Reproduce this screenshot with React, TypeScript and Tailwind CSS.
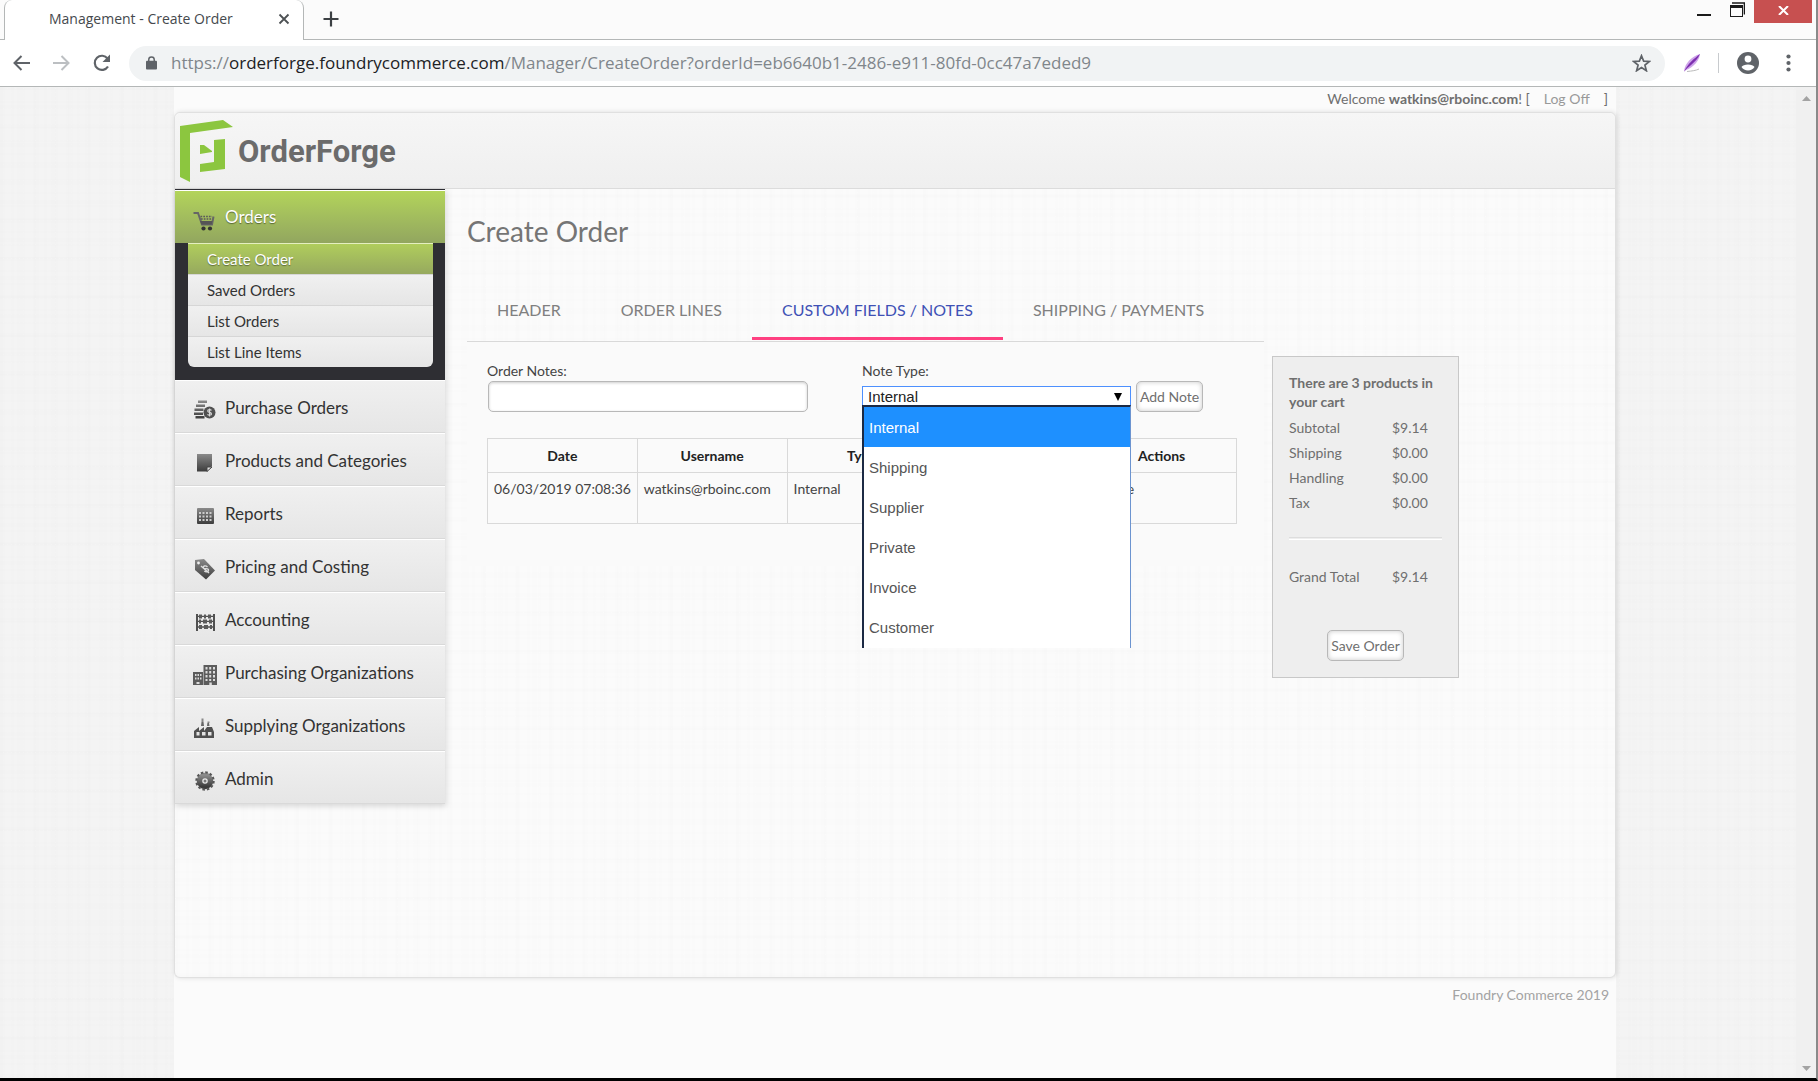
import React from "react";

const fill = "url(#steel)";

function SteelGradient() {
  return (
    <svg width="0" height="0" className="absolute" aria-hidden="true">
      <defs>
        <linearGradient id="steel" x1="0" y1="0" x2="0" y2="1">
          <stop offset="0" stopColor="#8a8a8a" />
          <stop offset="1" stopColor="#3c3c3c" />
        </linearGradient>
      </defs>
    </svg>
  );
}

function CartIcon() {
  return (
    <svg width="24" height="24" viewBox="0 0 24 24" aria-hidden="true">
      <path d="M1.500 4h4.500l4 11.500h10l1.500-8" fill="none" stroke="#666" strokeWidth="2" />
      <path d="M8 12h12.500l-.8 3.500H9.500z" fill="#555" />
      <path d="M8.500 7.500h11.500M9 10h11" stroke="#5a5a5a" strokeWidth="1.400" strokeDasharray="1.700 1.100" />
      <circle cx="11.500" cy="19.500" r="2.100" fill="#333" />
      <circle cx="18" cy="19.500" r="2.100" fill="#333" />
    </svg>
  );
}

function CoinsIcon() {
  return (
    <svg width="24" height="24" viewBox="0 0 24 24" aria-hidden="true">
      <path d="M6 2.500h9v2.500H6zM4 6.500h9v2.500H4zM2.500 10.500h9V13h-9zM2 14.500h9V17H2zM3.500 18h9v2.500h-9z" fill={fill} />
      <circle cx="17.500" cy="14.500" r="6" fill="#505050" />
      <path d="M19.500 12.300c-1-1-3.800-1-3.800.6 0 1.900 3.800 1 3.800 3 0 1.500-3 1.500-4 .4M17.600 10.600v8" fill="none" stroke="#ddd" strokeWidth="1.100" />
    </svg>
  );
}

function PageIcon() {
  return (
    <svg width="24" height="24" viewBox="0 0 24 24" aria-hidden="true">
      <path d="M5 3h15v12l-5 5.500H5z" fill={fill} />
      <path d="M15 20.500V16h5z" fill="#e4e4e4" stroke="#444" strokeWidth="1" />
    </svg>
  );
}

function TableIcon() {
  return (
    <svg width="24" height="24" viewBox="0 0 24 24" aria-hidden="true">
      <rect x="5" y="4" width="17" height="16" rx="1" fill={fill} />
      <path d="M7 8h2v2H7zM10.500 8h2v2h-2zM14 8h2v2h-2zM17.500 8h2v2h-2zM7 11.500h2v2H7zM10.500 11.500h2v2h-2zM14 11.500h2v2h-2zM17.500 11.500h2v2h-2zM7 15h2v2H7zM10.500 15h2v2h-2zM14 15h2v2h-2zM17.500 15h2v2h-2z" fill="#ccc" />
    </svg>
  );
}

function TagIcon() {
  return (
    <svg width="24" height="24" viewBox="0 0 24 24" aria-hidden="true">
      <path d="M3 3l9-1 11 11.500L14 22.500 3 13z" fill={fill} />
      <circle cx="6.500" cy="6" r="1.400" fill="#eee" />
      <path d="M15.500 10c-2-2-5-1-4 1 .8 1.600 3.800-.4 4.800 1.400 1 2-2 3.300-4 1.600M9 9l8 7" fill="none" stroke="#ddd" strokeWidth="1.400" />
    </svg>
  );
}

function AbacusIcon() {
  return (
    <svg width="24" height="24" viewBox="0 0 24 24" aria-hidden="true">
      <path d="M4 4h2v17H4zM21 4h2v17h-2zM5 5.700h17v1.300H5zM5 10.800h17v1.300H5zM5 16.300h17v1.400H5z" fill="#505050" />
      <path d="M7 4.500h3v4H7zM12 4.500h2v4h-2zM16 4.500h3v4h-3zM7 9.500h2v4H7zM11 9.500h4v4h-4zM17 9.500h3v4h-3zM7 15h3v4H7zM12 15h4v4h-4zM18 15h2v4h-2z" fill="#5a5a5a" />
    </svg>
  );
}

function BuildingsIcon() {
  return (
    <svg width="26" height="24" viewBox="0 0 26 24" aria-hidden="true">
      <path d="M1 9h10v13H1zM11.500 2H25v20H11.500z" fill="#5c5c5c" />
      <path d="M3 11h1.500v2H3zM5.500 11H7v2H5.500zM8 11h1.500v2H8zM3 14.500h1.500v2H3zM5.500 14.500H7v2H5.500zM8 14.500h1.500v2H8zM13.500 4h2v2.500h-2zM17.200 4h2v2.500h-2zM21 4h2v2.500h-2zM13.500 8h2v2.500h-2zM17.200 8h2v2.500h-2zM21 8h2v2.500h-2zM13.500 12h2v2.500h-2zM17.200 12h2v2.500h-2zM21 12h2v2.500h-2zM13.500 16h2v2h-2zM17.200 16h2v2h-2zM21 16h2v2h-2zM4.500 19h3v2h-3zM17.300 19.500h2.500V22h-2.500z" fill="#dcdcdc" />
    </svg>
  );
}

function FactoryIcon() {
  return (
    <svg width="24" height="24" viewBox="0 0 24 24" aria-hidden="true">
      <path d="M2 15l5-4v4l5-4v4l3-4h5l2 5v6H2z" fill="#505050" />
      <path d="M9 10l.5-4h2l.5 4zM15 10l.4-3h1.600l.5 3z" fill="#666" />
      <path d="M10.500 6V2.500M16.500 7V5.500" stroke="#888" strokeWidth="2" />
      <path d="M4.500 16h3v3.500h-3zM10 16h3.500v3.500H10zM16 16h3.500v3.500H16z" fill="#e4e4e4" />
    </svg>
  );
}

function GearIcon() {
  return (
    <svg width="24" height="24" viewBox="0 0 24 24" aria-hidden="true">
      <circle cx="13" cy="12" r="5.500" fill="none" stroke={fill} strokeWidth="5.500" />
      <circle cx="13" cy="12" r="8.700" fill="none" stroke="#555" strokeWidth="2" strokeDasharray="2.555 2" />
      <circle cx="13" cy="12" r="1.500" fill="#777" />
    </svg>
  );
}

const subItems = ["Create Order", "Saved Orders", "List Orders", "List Line Items"];

const menu = [
  { label: "Purchase Orders", Icon: CoinsIcon },
  { label: "Products and Categories", Icon: PageIcon },
  { label: "Reports", Icon: TableIcon },
  { label: "Pricing and Costing", Icon: TagIcon },
  { label: "Accounting", Icon: AbacusIcon },
  { label: "Purchasing Organizations", Icon: BuildingsIcon },
  { label: "Supplying Organizations", Icon: FactoryIcon },
  { label: "Admin", Icon: GearIcon },
];

const tabs = ["HEADER", "ORDER LINES", "CUSTOM FIELDS / NOTES", "SHIPPING / PAYMENTS"];
const noteTypes = ["Internal", "Shipping", "Supplier", "Private", "Invoice", "Customer"];
const totals = [
  ["Subtotal", "$9.14"],
  ["Shipping", "$0.00"],
  ["Handling", "$0.00"],
  ["Tax", "$0.00"],
];

const linen =
  "bg-[repeating-linear-gradient(90deg,rgba(0,0,0,0.005)_0px,rgba(0,0,0,0.005)_3px,transparent_3px,transparent_11px),repeating-linear-gradient(90deg,rgba(0,0,0,0.005)_0px,rgba(0,0,0,0.005)_5px,transparent_5px,transparent_17px),repeating-linear-gradient(0deg,rgba(0,0,0,0.005)_0px,rgba(0,0,0,0.005)_2px,transparent_2px,transparent_13px),repeating-linear-gradient(0deg,rgba(0,0,0,0.005)_0px,rgba(0,0,0,0.005)_4px,transparent_4px,transparent_19px)]";

function BrowserChrome() {
  return (
    <header className="shrink-0 bg-white font-['Open_Sans',sans-serif]">
      <div className="flex h-[40px] border-b border-[#b4b7b7] bg-[#fbfbfb]">
        <div className="-mb-px ml-[4px] flex w-[300px] items-center rounded-t-lg border-x border-[#b4b7b7] bg-white pr-[9px] pb-[3px] pl-[44px]">
          <span className="flex-1 whitespace-nowrap text-[14px] text-[#45494d]">Management - Create Order</span>
          <button aria-label="Close tab" className="p-1">
            <svg width="12" height="12" viewBox="0 0 12 12" aria-hidden="true">
              <path d="M1.500 1.500l9 9M10.500 1.500l-9 9" stroke="#4d5154" strokeWidth="1.800" />
            </svg>
          </button>
        </div>
        <button aria-label="New tab" className="ml-[18px] self-center pb-[2px]">
          <svg width="18" height="16" viewBox="0 0 18 16" aria-hidden="true">
            <path d="M1.500 8h15M9 .5v15" stroke="#3c4043" strokeWidth="2.200" />
          </svg>
        </button>
        <div className="flex-1" />
        <div className="mr-[4px] flex items-start">
          <button aria-label="Minimize" className="px-[10px] pt-[14px] pb-2">
            <svg width="14" height="2" aria-hidden="true"><rect width="14" height="2" fill="#1a1a1a" /></svg>
          </button>
          <button aria-label="Restore" className="px-[9px] pt-[2px]">
            <svg width="15" height="15" viewBox="0 0 15 15" aria-hidden="true">
              <path d="M2 1h12.500v11.500" fill="none" stroke="#1a1a1a" strokeWidth="1.600" />
              <rect x=".5" y="3.500" width="12" height="11" fill="#fbfbfb" stroke="#1a1a1a" />
              <rect x="0" y="3" width="13" height="3" fill="#1a1a1a" />
            </svg>
          </button>
          <button aria-label="Close" className="flex h-[23px] w-[58px] items-center justify-center bg-[#c75050] pb-[3px]">
            <svg width="11" height="9" viewBox="0 0 11 9" aria-hidden="true">
              <path d="M1 0l9 9M10 0L1 9" stroke="#fff" strokeWidth="2" />
            </svg>
          </button>
        </div>
      </div>
      <div className="flex h-[47px] items-center border-b border-[#b4b7b7] pr-[21px] pl-[13px]">
        <button aria-label="Back">
          <svg width="17" height="16" viewBox="0 0 17 16" aria-hidden="true">
            <path d="M17 8H2M8.500 1L1.500 8l7 7" fill="none" stroke="#5f6368" strokeWidth="2" />
          </svg>
        </button>
        <button aria-label="Forward" className="ml-[23px]">
          <svg width="17" height="16" viewBox="0 0 17 16" aria-hidden="true">
            <path d="M0 8h15M8.500 1l7 7-7 7" fill="none" stroke="#bcbfc2" strokeWidth="2" />
          </svg>
        </button>
        <button aria-label="Reload" className="ml-[22px]">
          <svg width="20" height="18" viewBox="0 0 20 18" aria-hidden="true">
            <path d="M15.600 4.600A7.100 7.100 0 1 0 16 12.500" fill="none" stroke="#5f6368" strokeWidth="2.200" />
            <path d="M18 .5V8h-7.500z" fill="#5f6368" />
          </svg>
        </button>
        <div className="ml-[17px] flex h-[35px] min-w-0 flex-1 items-center rounded-full bg-[#f1f3f4] pr-[14px] pl-[17px]">
          <svg width="11" height="14" viewBox="0 0 12 15" className="shrink-0" aria-hidden="true">
            <rect x="0" y="5" width="12" height="9.500" rx="1" fill="#5f6368" />
            <path d="M3 6V4a3 3 0 0 1 6 0v2" fill="none" stroke="#5f6368" strokeWidth="1.600" />
          </svg>
          <div
            role="textbox"
            tabIndex={0}
            aria-label="Address"
            className="ml-[14px] min-w-0 flex-1 overflow-hidden whitespace-nowrap text-[17px] leading-[24px] text-[#80868b]"
          >
            https://<span className="text-[#202124]">orderforge.foundrycommerce.com</span>/Manager/CreateOrder?orderId=eb6640b1-2486-e911-80fd-0cc47a7eded9
          </div>
          <button aria-label="Bookmark this page">
            <svg width="19" height="18" viewBox="0 0 22 21" aria-hidden="true">
              <path d="M11 2l2.500 6.300 6.700.4-5.200 4.300 1.700 6.500L11 15.900l-5.700 3.600L7 13 1.800 8.700l6.700-.4z" fill="none" stroke="#5f6368" strokeWidth="2" />
            </svg>
          </button>
        </div>
        <button aria-label="Feather extension" className="ml-[18px]">
          <svg width="18" height="20" viewBox="0 0 18 20" aria-hidden="true">
            <path d="M17 1C9 3 2 10 1 18c5-2 15-7 16-17z" fill="#cfa6ea" />
            <path d="M17 1C12 5 4 11 1 19c3-5 12-9 16-18z" fill="#7d2fb0" />
            <path d="M4 18.500c5-.5 9-1 12-2.500" stroke="#bbb" fill="none" />
          </svg>
        </button>
        <div className="ml-[17px] h-[20px] w-px bg-[#c8cbce]" />
        <button aria-label="Profile" className="ml-[17px]">
          <svg width="24" height="24" viewBox="0 0 24 24" aria-hidden="true">
            <circle cx="12" cy="12" r="11" fill="#5f6368" />
            <circle cx="12" cy="8" r="3.400" fill="#fff" />
            <path d="M5.500 16c1.500-3.500 11.500-3.500 13 0-2.500 4.500-10.500 4.500-13 0z" fill="#fff" />
          </svg>
        </button>
        <button aria-label="Browser menu" className="ml-[22px] p-[4px]">
          <svg width="5" height="18" viewBox="0 0 5 18" aria-hidden="true">
            <circle cx="2.500" cy="2.500" r="2.100" fill="#5f6368" />
            <circle cx="2.500" cy="9" r="2.100" fill="#5f6368" />
            <circle cx="2.500" cy="15.500" r="2.100" fill="#5f6368" />
          </svg>
        </button>
      </div>
    </header>
  );
}

function Logo() {
  return (
    <a href="#home" className="flex items-center gap-[5px]" aria-label="OrderForge">
      <svg width="53" height="63" viewBox="0 0 53 63" aria-hidden="true">
        <g fill="#8cc63f">
          <path d="M0 6L43 0l10 7-43 6v49L0 57z" />
          <path d="M34 20l11-1v30l-25 3v-8l14-2z" />
          <path d="M20 25h4l8 6v1l-12 2z" />
        </g>
      </svg>
      <span className="font-[Roboto,sans-serif] text-[31px] leading-[40px] font-bold text-[#6b6b6b]">OrderForge</span>
    </a>
  );
}

function Sidebar() {
  return (
    <nav className="w-[270px] shrink-0 self-start text-[#333] shadow-[1px_2px_6px_rgba(0,0,0,0.15)]">
      <div className="border-t border-[#2e2e33] bg-[#2e2e33] pb-[13px]">
        <a href="#orders" className="flex h-[53px] items-center border-t border-white bg-gradient-to-b from-[#b3d45a] to-[#92a65f] text-[17px] text-white [text-shadow:0_1px_1px_rgba(0,0,0,0.45)]">
          <span className="mt-[8px] ml-[17px] w-[33px]"><CartIcon /></span>
          Orders
        </a>
        <ul className="mr-[12px] ml-[13px] overflow-hidden rounded-b-md text-[15px]">
          {subItems.map((item, i) => (
            <li key={item}>
              <a
                href="#submenu"
                className={
                  i === 0
                    ? "flex h-[31px] items-center border-t border-[#e4efc0] bg-gradient-to-b from-[#b0cd5c] to-[#96a95e] pl-[19px] text-white [text-shadow:0_1px_1px_rgba(0,0,0,0.4)]"
                    : "flex h-[31px] items-center border-t border-[#d6d6d6] bg-gradient-to-b from-[#f0f0f0] to-[#e6e6e6] pl-[19px]"
                }
              >
                {item}
              </a>
            </li>
          ))}
        </ul>
      </div>
      <ul>
        {menu.map(({ label, Icon }) => (
          <li key={label}>
            <a href="#menu" className="flex h-[53px] items-center border-t border-b border-t-white border-b-[#d9d9d9] bg-gradient-to-b from-[#f0f0f0] to-[#e6e6e6] pt-[2px] text-[17px]">
              <span className="mt-[4px] ml-[17px] w-[33px]"><Icon /></span>
              {label}
            </a>
          </li>
        ))}
      </ul>
    </nav>
  );
}

const cell = "border border-[#d9d9d9] px-[6px]";
const bodyCell = "border border-[#d9d9d9] px-[6px] pt-[5px]";
const softButton =
  "h-[31px] rounded-[5px] border border-[#b8b8b8] bg-white text-[14px] text-[#6f6f6f] shadow-[inset_0_0_5px_rgba(0,0,0,0.22)]";

function NotesPanel() {
  return (
    <section className="min-h-[224px] bg-[#fafafa] pt-[19px] pr-[27px] pl-[20px] text-[14px] text-[#444]">
      <div className="flex">
        <div className="w-1/2">
          <label htmlFor="order-notes" className="block leading-[20px]">Order Notes:</label>
          <input
            id="order-notes"
            type="text"
            className="ml-px block h-[31px] w-[320px] rounded-[5px] border border-[#b8b8b8] bg-white px-2 shadow-[inset_0_1px_3px_rgba(0,0,0,0.2)]"
          />
        </div>
        <div className="w-1/2">
          <label htmlFor="note-type" className="block leading-[20px]">Note Type:</label>
          <div className="flex items-center gap-[5px] whitespace-nowrap">
            <div className="relative w-[269px]">
              <select
                id="note-type"
                defaultValue="Internal"
                className="block h-[21px] w-full appearance-none border border-[#4d90fe] bg-white pl-[5px] font-['Liberation_Sans',sans-serif] text-[15px] leading-[19px] text-[#222]"
              >
                {noteTypes.map((type) => (
                  <option key={type}>{type}</option>
                ))}
              </select>
              <svg width="8" height="8" viewBox="0 0 8 8" className="pointer-events-none absolute top-[7px] right-[9px]" aria-hidden="true">
                <path d="M0 0h8L4 8z" fill="#000" />
              </svg>
              <ul
                role="listbox"
                aria-label="Note type options"
                className="absolute top-[19px] right-0 left-0 z-10 border-t-2 border-r border-l-2 border-t-[#1c2a44] border-r-[#6c94d0] border-l-[#1c2a44] bg-white pb-px font-['Liberation_Sans',sans-serif] text-[15px] text-[#555]"
              >
                {noteTypes.map((type, i) => (
                  <li
                    key={type}
                    role="option"
                    aria-selected={i === 0}
                    className={i === 0 ? "flex h-[40px] items-center bg-[#1e90ff] pt-[2px] pl-[5px] text-white" : "flex h-[40px] items-center pt-[2px] pl-[5px]"}
                  >
                    {type}
                  </li>
                ))}
              </ul>
            </div>
            <button className={softButton + " w-[67px]"}>Add Note</button>
          </div>
        </div>
      </div>
      <table className="mt-[26px] w-full table-fixed border-collapse whitespace-nowrap">
        <thead>
          <tr className="h-[34px] text-[#222]">
            {["Date", "Username", "Type", "Note", "Actions"].map((h) => (
              <th key={h} className={cell + " font-bold"}>{h}</th>
            ))}
          </tr>
        </thead>
        <tbody>
          <tr className="h-[51px] align-top">
            <td className={bodyCell}>06/03/2019 07:08:36</td>
            <td className={bodyCell}>watkins@rboinc.com</td>
            <td className={bodyCell}>Internal</td>
            <td className={bodyCell} />
            <td className={bodyCell}><a href="#delete">Delete</a></td>
          </tr>
        </tbody>
      </table>
    </section>
  );
}

function Cart() {
  return (
    <aside className="mt-[167px] ml-[8px] w-[187px] shrink-0 self-start border border-[#c8c8c8] bg-[#eee] px-[16px] pt-[16px] pb-[16px] text-[14px] text-[#6f6f6f]">
      <h2 className="leading-[19px] font-bold">There are 3 products in your cart</h2>
      <dl className="mt-[4px] leading-[25px]">
        {totals.map(([name, value]) => (
          <div key={name} className="flex">
            <dt className="w-[103px]">{name}</dt>
            <dd>{value}</dd>
          </div>
        ))}
      </dl>
      <hr className="mt-[22px] h-[3px] border-t border-b border-t-[#ddd] border-b-white" />
      <dl className="mt-[24px] flex leading-[25px]">
        <dt className="w-[103px]">Grand Total</dt>
        <dd>{"$9.14"}</dd>
      </dl>
      <div className="mt-[41px] flex justify-center">
        <button className={softButton + " w-[77px] whitespace-nowrap"}>Save Order</button>
      </div>
    </aside>
  );
}

export default function App() {
  return (
    <div className="flex min-h-screen flex-col border-r-2 border-b-[3px] border-r-[#8a8a8a] border-b-black bg-[#f4f4f4] font-[Lato,sans-serif]">
      <SteelGradient />
      <BrowserChrome />
      <div className="flex flex-1">
        <div className={linen + " flex min-w-0 flex-1 flex-col pr-[180px] pl-[174px]"}>
          <div className="flex flex-1 flex-col bg-[#fbfbfb]">
            <p className="h-[25px] pr-[8px] text-right text-[14px] leading-[24px] text-[#6f6f6f]">
              Welcome <strong>watkins@rboinc.com</strong>! [
              <a href="#logoff" className="mx-[14px] text-[#999]">Log Off</a>]
            </p>
            <div className="flex flex-1 flex-col rounded-md border border-[#e0e0e0] bg-[#fbfbfb] shadow-[1px_0_5px_rgba(0,0,0,0.12)]">
              <div className="flex h-[76px] items-center rounded-t-md border-b border-[#dcdcdc] bg-gradient-to-b from-[#f6f6f6] to-[#efefef] pt-[2px] pl-[5px]">
                <Logo />
              </div>
              <div className={linen + " flex flex-1"}>
                <Sidebar />
                <main className="ml-[22px] w-[797px] min-w-0">
                  <h1 className="pt-[22px] text-[28px] leading-[40px] text-[#757575]">Create Order</h1>
                  <div role="tablist" className="mt-[29px] flex border-b border-[#d9d9d9]">
                    {tabs.map((tab, i) => (
                      <button
                        key={tab}
                        role="tab"
                        aria-selected={i === 2}
                        className={
                          i === 2
                            ? "mb-px h-[60px] border-b-3 border-[#ff4081] px-[30px] pt-[2px] text-[16px] whitespace-nowrap text-[#3f51b5]"
                            : "mb-px h-[60px] border-b-3 border-transparent px-[30px] pt-[2px] text-[16px] whitespace-nowrap text-[#808080]"
                        }
                      >
                        {tab}
                      </button>
                    ))}
                  </div>
                  <NotesPanel />
                </main>
                <Cart />
              </div>
            </div>
            <footer className="h-[100px] pt-[7px] pr-[7px] text-right text-[14px] leading-[20px] text-[#a3a3a3]">Foundry Commerce 2019</footer>
          </div>
        </div>
        <div className="flex w-[20px] flex-col items-center justify-between bg-[#f0f0f0] pt-[9px] pb-[7px]">
          <svg width="9" height="5" aria-hidden="true"><path d="M0 5h9L4.500 0z" fill="#a3a3a3" /></svg>
          <svg width="9" height="5" aria-hidden="true"><path d="M0 0h9L4.500 5z" fill="#a3a3a3" /></svg>
        </div>
      </div>
    </div>
  );
}
